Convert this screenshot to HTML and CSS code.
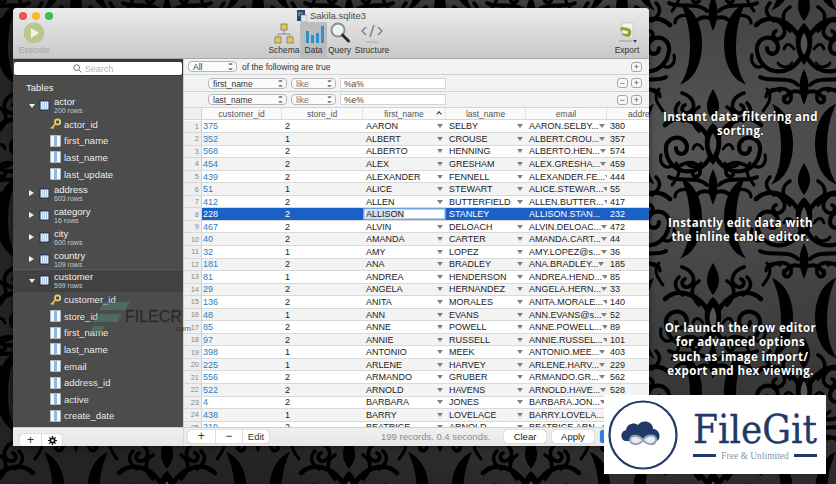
FILE: index.html
```html
<!DOCTYPE html>
<html lang="en">
<head>
<meta charset="utf-8">
<title>Sakila.sqlite3</title>
<link rel="stylesheet" href="styles.css">
</head>
<body>
<svg class="defs" width="0" height="0" aria-hidden="true">
  <defs>
    <g id="half" fill="none" stroke="#000" stroke-linecap="round">
      <path d="M3 10C14 32 44 28 47 4C49-12 27-14 26 0C26 9 37 9 37 1" stroke-width="4.2"/>
      <path d="M4 -8C14 -28 36 -34 48 -22" stroke-width="4.6"/>
      <path d="M14 -16C22 -24 24 -34 14 -40M30 -26C38 -32 40 -38 34 -44" stroke-width="3.6"/>
      <path d="M10 2C14 -4 18 -4 20 2M12 16C16 22 24 20 26 16" stroke-width="2.8"/>
      <path d="M6 38C16 28 34 36 44 30M2 46C10 42 16 46 20 52" stroke-width="3.8"/>
      <path d="M24 44C30 40 38 44 38 50M40 18C48 24 54 16 52 8" stroke-width="3.2"/>
      <path d="M62 -40C84 -28 84 22 62 34C72 16 72 -16 62 -40Z" fill="#000" stroke-width="3"/>
      <path d="M60 46C72 50 76 62 66 66C60 67 58 60 63 58" stroke-width="3.8"/>
      <path d="M56 -54C68 -62 80 -58 78 -48C76 -42 69 -44 71 -50" stroke-width="3.8"/>
      <path d="M50 -36C56 -44 60 -50 54 -58" stroke-width="3"/>
    </g>
    <g id="motif">
      <use href="#half"/>
      <use href="#half" transform="scale(-1 1)"/>
      <path d="M0-58C7-46 9-38 0-26C-9-38-7-46 0-58Z" fill="#000"/>
      <path d="M0-24C12-14 10 6 0 18C-10 6-12-14 0-24Z" fill="#000"/>
      <path d="M0-14C5-7 4 2 0 8C-4 2-5-7 0-14Z" fill="#555"/>
      <path d="M0 22C6 34 6 44 0 58C-6 44-6 34 0 22Z" fill="#000"/>
    </g>
    <pattern id="damask" width="182" height="174" patternUnits="userSpaceOnUse" patternTransform="translate(622 59)">
      <use href="#motif" x="91" y="88"/>
      <use href="#motif" x="0" y="-12"/>
      <use href="#motif" x="182" y="-12"/>
      <use href="#motif" x="0" y="162"/>
      <use href="#motif" x="182" y="162"/>
    </pattern>
    <radialGradient id="shade" cx="82%" cy="30%" r="85%">
      <stop offset="0" stop-color="#555"/>
      <stop offset="1" stop-color="#232323"/>
    </radialGradient>
    <symbol id="tbl" viewBox="0 0 11 11">
      <rect x=".5" y=".5" width="10" height="10" fill="#1c2a44"/>
      <rect x="1.5" y="1.5" width="8" height="8" fill="#e6eef6"/>
      <path d="M3.5 1.5v8M5.5 1.5v8M7.5 1.5v8" stroke="#a9c6e4" stroke-width=".9"/>
    </symbol>
    <symbol id="col" viewBox="0 0 11 12">
      <rect x=".5" y=".5" width="10" height="11" fill="#f4f7fb" stroke="#b8c4d0" stroke-width=".6"/>
      <rect x="4" y="1" width="3" height="10" fill="#8fb9e3"/>
    </symbol>
    <symbol id="key" viewBox="0 0 11 11">
      <circle cx="7.6" cy="3.4" r="2.6" fill="none" stroke="#f0cf6a" stroke-width="1.7"/>
      <path d="M5.6 5.4L1 10M2.4 8.6l1.4 1.2" stroke="#e9c04f" stroke-width="1.7" fill="none"/>
    </symbol>
  </defs>
</svg>

<main class="stage">
  <svg class="wallpaper" width="836" height="484" aria-hidden="true">
    <rect width="836" height="484" fill="url(#shade)"/>
    <rect width="836" height="484" fill="url(#damask)"/>
  </svg>

  <section class="window">
    <header class="chrome">
      <div class="titlebar">
        <div class="lights"><i class="light red"></i><i class="light amber"></i><i class="light green"></i></div>
        <div class="doc">
          <svg class="doc-icon" width="11" height="12" viewBox="0 0 11 12"><rect x="1" y="0" width="8" height="11" fill="#2b4468"/><rect x="5" y="5" width="6" height="7" fill="#dfe5ec" stroke="#7b8794" stroke-width=".6"/><path d="M2 3h5M2 5h2" stroke="#9fb4cc" stroke-width="1"/></svg>
          <span>Sakila.sqlite3</span>
        </div>
        <div></div>
      </div>
      <div class="toolbar">
        <div class="tool tool-exec">
          <svg width="22" height="22" viewBox="0 0 22 22"><circle cx="11" cy="11" r="10.5" fill="#b9c98e"/><path d="M8 6l8 5-8 5z" fill="#f1f3e6"/></svg>
          <span>Execute</span>
        </div>
        <div class="tabs">
          <div class="tool tool-schema">
            <svg width="22" height="22" viewBox="0 0 22 22"><path d="M11 8v4M5 15v-3h12v3" fill="none" stroke="#8a8a8a"/><rect x="8" y="2" width="6" height="6" fill="#e5c65b" stroke="#7c6b3a" stroke-width=".7"/><rect x="2" y="15" width="6" height="6" fill="#e5c65b" stroke="#7c6b3a" stroke-width=".7"/><rect x="14" y="15" width="6" height="6" fill="#e5c65b" stroke="#7c6b3a" stroke-width=".7"/></svg>
            <span>Schema</span>
          </div>
          <div class="tool tool-data">
            <svg width="22" height="22" viewBox="0 0 22 22"><path d="M3 9h3v12H3zM8 13h3v8H8zM13 11h3v10h-3zM18 4h3v17h-3z" fill="#2c93c8"/></svg>
            <span>Data</span>
          </div>
          <div class="tool tool-query">
            <svg width="22" height="22" viewBox="0 0 22 22"><circle cx="9" cy="8" r="6.5" fill="#eef1f3" stroke="#8d8d8d" stroke-width="2"/><path d="M13.5 13l6 6" stroke="#2a2a2a" stroke-width="3" stroke-linecap="round"/></svg>
            <span>Query</span>
          </div>
          <div class="tool tool-struct">
            <svg width="24" height="22" viewBox="0 0 24 22"><path d="M6 5L2 9l4 4M18 5l4 4-4 4M14 3l-4 12" fill="none" stroke="#8b8b8b" stroke-width="1.7"/><path d="M6 20h12" stroke="#aaa"/></svg>
            <span>Structure</span>
          </div>
        </div>
        <div class="tool tool-export">
          <svg width="22" height="22" viewBox="0 0 22 22"><path d="M6 1h11v15H6z" fill="#f2f2f2" stroke="#bbb" stroke-width=".7"/><path d="M10 4L4 6l1 4 1-2 5 1c2 0 1 3-1 3l-4-1 1 3 5 1c4 0 5-8 0-9L7 5z" fill="#83a832"/><path d="M3 19h13" stroke="#999"/><path d="M17 18h4l-2 3z" fill="#444"/></svg>
          <span>Export</span>
        </div>
      </div>
    </header>

    <div class="panes">
      <aside class="sidebar">
        <div class="searchbar">
          <div class="search">
            <svg width="9" height="9" viewBox="0 0 9 9"><circle cx="3.7" cy="3.7" r="2.9" fill="none" stroke="#777"/><path d="M6 6l2.6 2.6" stroke="#777"/></svg>
            <span>Search</span>
          </div>
        </div>
        <h2 class="tables">Tables</h2>
        <div class="tree">
          <div class="tbl"><i class="tri down"></i><svg class="ti"><use href="#tbl"/></svg><div><b>actor</b><small>200 rows</small></div></div>
          <div class="field"><svg class="fi"><use href="#key"/></svg>actor_id</div>
          <div class="field"><svg class="fi"><use href="#col"/></svg>first_name</div>
          <div class="field"><svg class="fi"><use href="#col"/></svg>last_name</div>
          <div class="field"><svg class="fi"><use href="#col"/></svg>last_update</div>
          <div class="tbl"><i class="tri"></i><svg class="ti"><use href="#tbl"/></svg><div><b>address</b><small>603 rows</small></div></div>
          <div class="tbl"><i class="tri"></i><svg class="ti"><use href="#tbl"/></svg><div><b>category</b><small>16 rows</small></div></div>
          <div class="tbl"><i class="tri"></i><svg class="ti"><use href="#tbl"/></svg><div><b>city</b><small>600 rows</small></div></div>
          <div class="tbl"><i class="tri"></i><svg class="ti"><use href="#tbl"/></svg><div><b>country</b><small>109 rows</small></div></div>
          <div class="tbl tbl-on"><i class="tri down"></i><svg class="ti"><use href="#tbl"/></svg><div><b>customer</b><small>599 rows</small></div></div>
          <div class="field"><svg class="fi"><use href="#key"/></svg>customer_id</div>
          <div class="field"><svg class="fi"><use href="#col"/></svg>store_id</div>
          <div class="field"><svg class="fi"><use href="#col"/></svg>first_name</div>
          <div class="field"><svg class="fi"><use href="#col"/></svg>last_name</div>
          <div class="field"><svg class="fi"><use href="#col"/></svg>email</div>
          <div class="field"><svg class="fi"><use href="#col"/></svg>address_id</div>
          <div class="field"><svg class="fi"><use href="#col"/></svg>active</div>
          <div class="field"><svg class="fi"><use href="#col"/></svg>create_date</div>
        </div>
      </aside>

      <div class="content">
        <div class="filter filter-head">
          <div class="select sel-all">All<i class="updown"></i></div>
          <span class="filter-label">of the following are true</span>
          <div class="roundbtns"><button class="rb">+</button></div>
        </div>
        <div class="filter filter-rule">
          <div class="select sel-col">first_name<i class="updown"></i></div>
          <div class="select sel-op">like<i class="updown"></i></div>
          <div class="input">%a%</div>
          <div class="roundbtns"><button class="rb">−</button><button class="rb">+</button></div>
        </div>
        <div class="filter filter-rule">
          <div class="select sel-col">last_name<i class="updown"></i></div>
          <div class="select sel-op">like<i class="updown"></i></div>
          <div class="input">%e%</div>
          <div class="roundbtns"><button class="rb">−</button><button class="rb">+</button></div>
        </div>

        <div class="grid">
          <div class="row head"><span class="n"></span><span>customer_id</span><span>store_id</span><span class="sorted">first_name<i class="caret"></i></span><span>last_name</span><span>email</span><span>addre</span></div>
          <div class="row"><span class="n">1</span><span class="id">375</span><span>2</span><span class="dd">AARON</span><span class="dd">SELBY</span><span class="dd">AARON.SELBY...</span><span>380</span></div>
          <div class="row"><span class="n">2</span><span class="id">352</span><span>1</span><span class="dd">ALBERT</span><span class="dd">CROUSE</span><span class="dd">ALBERT.CROU...</span><span>357</span></div>
          <div class="row"><span class="n">3</span><span class="id">568</span><span>2</span><span class="dd">ALBERTO</span><span class="dd">HENNING</span><span class="dd">ALBERTO.HEN...</span><span>574</span></div>
          <div class="row"><span class="n">4</span><span class="id">454</span><span>2</span><span class="dd">ALEX</span><span class="dd">GRESHAM</span><span class="dd">ALEX.GRESHA...</span><span>459</span></div>
          <div class="row"><span class="n">5</span><span class="id">439</span><span>2</span><span class="dd">ALEXANDER</span><span class="dd">FENNELL</span><span class="dd">ALEXANDER.FE...</span><span>444</span></div>
          <div class="row"><span class="n">6</span><span class="id">51</span><span>1</span><span class="dd">ALICE</span><span class="dd">STEWART</span><span class="dd">ALICE.STEWAR...</span><span>55</span></div>
          <div class="row"><span class="n">7</span><span class="id">412</span><span>2</span><span class="dd">ALLEN</span><span class="dd">BUTTERFIELD</span><span class="dd">ALLEN.BUTTER...</span><span>417</span></div>
          <div class="row selected"><span class="n">8</span><span class="id">228</span><span>2</span><span class="editing"><mark>ALLISON</mark></span><span class="dd">STANLEY</span><span class="dd">ALLISON.STAN...</span><span>232</span></div>
          <div class="row"><span class="n">9</span><span class="id">467</span><span>2</span><span class="dd">ALVIN</span><span class="dd">DELOACH</span><span class="dd">ALVIN.DELOAC...</span><span>472</span></div>
          <div class="row"><span class="n">10</span><span class="id">40</span><span>2</span><span class="dd">AMANDA</span><span class="dd">CARTER</span><span class="dd">AMANDA.CART...</span><span>44</span></div>
          <div class="row"><span class="n">11</span><span class="id">32</span><span>1</span><span class="dd">AMY</span><span class="dd">LOPEZ</span><span class="dd">AMY.LOPEZ@s...</span><span>36</span></div>
          <div class="row"><span class="n">12</span><span class="id">181</span><span>2</span><span class="dd">ANA</span><span class="dd">BRADLEY</span><span class="dd">ANA.BRADLEY...</span><span>185</span></div>
          <div class="row"><span class="n">13</span><span class="id">81</span><span>1</span><span class="dd">ANDREA</span><span class="dd">HENDERSON</span><span class="dd">ANDREA.HEND...</span><span>85</span></div>
          <div class="row"><span class="n">14</span><span class="id">29</span><span>2</span><span class="dd">ANGELA</span><span class="dd">HERNANDEZ</span><span class="dd">ANGELA.HERN...</span><span>33</span></div>
          <div class="row"><span class="n">15</span><span class="id">136</span><span>2</span><span class="dd">ANITA</span><span class="dd">MORALES</span><span class="dd">ANITA.MORALE...</span><span>140</span></div>
          <div class="row"><span class="n">16</span><span class="id">48</span><span>1</span><span class="dd">ANN</span><span class="dd">EVANS</span><span class="dd">ANN.EVANS@s...</span><span>52</span></div>
          <div class="row"><span class="n">17</span><span class="id">85</span><span>2</span><span class="dd">ANNE</span><span class="dd">POWELL</span><span class="dd">ANNE.POWELL...</span><span>89</span></div>
          <div class="row"><span class="n">18</span><span class="id">97</span><span>2</span><span class="dd">ANNIE</span><span class="dd">RUSSELL</span><span class="dd">ANNIE.RUSSEL...</span><span>101</span></div>
          <div class="row"><span class="n">19</span><span class="id">398</span><span>1</span><span class="dd">ANTONIO</span><span class="dd">MEEK</span><span class="dd">ANTONIO.MEE...</span><span>403</span></div>
          <div class="row"><span class="n">20</span><span class="id">225</span><span>1</span><span class="dd">ARLENE</span><span class="dd">HARVEY</span><span class="dd">ARLENE.HARV...</span><span>229</span></div>
          <div class="row"><span class="n">21</span><span class="id">556</span><span>2</span><span class="dd">ARMANDO</span><span class="dd">GRUBER</span><span class="dd">ARMANDO.GR...</span><span>562</span></div>
          <div class="row"><span class="n">22</span><span class="id">522</span><span>2</span><span class="dd">ARNOLD</span><span class="dd">HAVENS</span><span class="dd">ARNOLD.HAVE...</span><span>528</span></div>
          <div class="row"><span class="n">23</span><span class="id">4</span><span>2</span><span class="dd">BARBARA</span><span class="dd">JONES</span><span class="dd">BARBARA.JON...</span><span>8</span></div>
          <div class="row"><span class="n">24</span><span class="id">438</span><span>1</span><span class="dd">BARRY</span><span class="dd">LOVELACE</span><span class="dd">BARRY.LOVELA...</span><span>443</span></div>
          <div class="row"><span class="n">25</span><span class="id">219</span><span>2</span><span class="dd">BEATRICE</span><span class="dd">ARNOLD</span><span class="dd">BEATRICE.ARN...</span><span>224</span></div>
        </div>
      </div>
    </div>

    <footer class="footer">
      <div class="foot-left">
        <div class="seg"><span class="seg-a">+</span><span class="seg-b"><svg width="9" height="9" viewBox="0 0 9 9"><circle cx="4.5" cy="4.5" r="2.2" fill="none" stroke="#111" stroke-width="1.7"/><path d="M4.5 0v2M4.5 7v2M0 4.5h2M7 4.5h2M1.3 1.3l1.4 1.4M6.3 6.3l1.4 1.4M7.7 1.3L6.3 2.7M2.7 6.3L1.3 7.7" stroke="#111" stroke-width="1.2"/></svg></span></div>
      </div>
      <div class="foot-right">
        <div class="seg seg-edit"><span class="seg-c">+</span><span class="seg-c">−</span><span class="seg-d">Edit</span></div>
        <span class="status">199 records. 0.4 seconds.</span>
        <button class="fbtn">Clear</button>
        <button class="fbtn">Apply</button>
        <button class="fbtn primary">Save</button>
      </div>
    </footer>
  </section>

  <aside class="captions">
    <p class="cap cap-1">Instant data filtering and<br>sorting.</p>
    <p class="cap cap-2">Instantly edit data with<br>the inline table editor.</p>
    <p class="cap cap-3">Or launch the row editor<br>for advanced options<br>such as image import/<br>export and hex viewing.</p>
  </aside>

  <div class="watermark">
    <svg width="40" height="34" viewBox="0 0 40 34"><path d="M14 0h26l-5 8H9zM8 12h24l-5 8H3zM3 24h12l-4 7H0z" fill="#4d8a72" opacity=".5"/></svg>
    <div class="wm-text"><span>FILECR</span><small>.com</small></div>
  </div>

  <div class="logo">
    <svg class="logo-mark" width="72" height="72" viewBox="0 0 72 72">
      <circle cx="36" cy="36" r="33.5" fill="none" stroke="#1f3a68" stroke-width="2.2"/>
      <path d="M19 42c-5 0-7-9 0-11 1-7 9-8 12-5 4-6 15-4 15 4 7 0 9 11 3 12z" fill="#1f3a68"/>
      <path d="M36 41c-4-5-11-6-13-1-1 5 8 8 13 1 5-7 14-5 13 0-1 6-9 5-13 0z" fill="#e8ecf1" stroke="#93a1b6" stroke-width="2"/>
    </svg>
    <div class="logo-text">
      <div class="logo-name">FileGit</div>
      <div class="logo-tag"><i></i><span>Free &amp; Unlimited</span><i></i></div>
    </div>
  </div>
</main>
</body>
</html>
```

FILE: styles.css
```css
* { box-sizing: border-box; }
html, body { margin: 0; padding: 0; }
body { width: 836px; height: 484px; overflow: hidden; background: #333; font-family: "Liberation Sans", Arial, sans-serif; }
.defs { position: absolute; }
.stage { position: relative; width: 836px; height: 484px; display: grid; grid-template-columns: 649px 187px; overflow: hidden; }
.wallpaper { position: absolute; left: 0; top: 0; }

/* window */
.window { position: relative; margin: 8px 0 0 13px; width: 636px; height: 438px; display: flex; flex-direction: column; background: #ececec; border-radius: 4px 4px 0 0; overflow: hidden; box-shadow: 0 0 6px rgba(0,0,0,.6); }
.chrome { height: 51px; background: linear-gradient(#ebebeb, #c9c9c9); border-bottom: 1px solid #a9a9a9; flex: none; }
.titlebar { height: 14px; display: grid; grid-template-columns: 1fr auto 1fr; align-items: center; padding-top: 1px; }
.lights { display: flex; gap: 5px; padding-left: 6px; padding-top: 1px; }
.light { width: 8px; height: 8px; border-radius: 50%; display: block; }
.red { background: #f0524f; }
.amber { background: #f5b82e; }
.green { background: #38c149; }
.doc { display: flex; align-items: center; gap: 3px; font-size: 9.5px; color: #4a4a4a; }
.doc-icon { display: block; }
.toolbar { display: flex; height: 36px; padding-left: 4px; }
.tool { display: flex; flex-direction: column; align-items: center; justify-content: flex-end; font-size: 8.5px; line-height: 10px; color: #333; padding-bottom: 3px; }
.tool svg { display: block; margin-bottom: 1px; }
.tool-exec { width: 34px; color: #a3a3a3; }
.tabs { display: flex; margin-left: 217px; }
.tool-schema { width: 32px; }
.tool-data { width: 27px; background: #bcbcbc; border-radius: 2px 2px 0 0; }
.tool-query { width: 25px; }
.tool-struct { width: 40px; }
.tool-export { width: 30px; margin-left: auto; margin-right: 7px; }

/* panes */
.panes { display: flex; height: 368px; flex: none; }
.sidebar { width: 171px; flex: none; background: #4c4c4c; border-right: 1px solid #cfcfcf; color: #f2f2f2; overflow: hidden; padding-left: 1px; }
.searchbar { height: 17px; padding: 3px 1px 1px 0; background: #393939; }
.search { height: 13px; background: #fff; border-radius: 2px; display: flex; align-items: center; justify-content: center; gap: 3px; font-size: 9px; color: #b4b4b4; padding-right: 10px; }
.tables { margin: 5px 0 0 12px; height: 13px; font-size: 9.5px; line-height: 13px; font-weight: 400; }
.tree { margin-top: 1px; }
.tbl { position: relative; height: 22px; display: flex; align-items: center; padding-left: 16px; margin-left: -1px; }
.tree > .tbl:first-child { height: 21px; }
.tbl b { display: block; font-weight: 400; font-size: 9.5px; line-height: 10px; }
.tbl small { display: block; font-size: 7px; line-height: 7px; color: #c9c9c9; }
.tbl-on { background: #424242; border-top: 1px solid #5a5a5a; border-bottom: 1px solid #3d3d3d; margin-top: -1px; height: 23px; margin-bottom: -1px; }
.tri { width: 0; height: 0; border-style: solid; border-width: 3px 0 3px 5px; border-color: transparent transparent transparent #f0f0f0; margin-right: 3px; display: block; }
.tri.down { border-width: 4px 3px 0 3px; border-color: #f0f0f0 transparent transparent transparent; margin-right: 2px; }
.ti { width: 11px; height: 11px; margin: 0 4px 0 2px; flex: none; }
.field { height: 16.6px; display: flex; align-items: center; padding-left: 36px; font-size: 9.5px; text-shadow: 0 0 1px rgba(0,0,0,.4); }
.fi { width: 11px; height: 12px; margin-right: 3px; flex: none; }

/* filters */
.content { position: relative; flex: 1; min-width: 0; background: #f4f4f4; overflow: hidden; }
.filter { display: flex; align-items: center; border-bottom: 1px solid #d2d2d2; background: #f3f3f3; font-size: 8.5px; color: #333; position: relative; }
.filter-head { height: 16px; padding-left: 4px; }
.filter-rule { height: 17px; padding-left: 24px; }
.filter-rule + .filter-rule { height: 16px; }
.select { position: relative; height: 11px; line-height: 10px; border: 1px solid #b5b5b5; border-radius: 4px; background: #fbfbfb; padding-left: 4px; font-size: 8.5px; color: #333; }
.updown { position: absolute; right: 3px; top: 1px; width: 5px; height: 7px; border-top: 2px solid #8a8a8a; border-bottom: 2px solid #8a8a8a; border-left: 1px solid transparent; border-right: 1px solid transparent; border-radius: 2px; }
.sel-all { width: 49px; }
.sel-col { width: 79px; margin-right: 4px; }
.sel-op { width: 45px; margin-right: 4px; color: #777; }
.filter-label { margin-left: 5px; }
.input { width: 106px; height: 11px; line-height: 11px; background: #fff; border: 1px solid #d5d5d5; padding-left: 3px; font-size: 8.5px; color: #444; }
.roundbtns { position: absolute; right: 7px; top: 50%; transform: translateY(-50%); display: flex; gap: 3px; }
.rb { width: 11px; height: 10px; padding: 0; border: 1px solid #a5a5a5; border-radius: 3px; background: #f8f8f8; font: 9px/8px "Liberation Sans", sans-serif; color: #555; }

/* table */
.grid { display: grid; grid-auto-rows: 12.56px; position: relative; height: 319px; overflow: hidden; background: #fff; }
.row { display: grid; grid-template-columns: 18px 80px 81px 83px 80px 81px 42px; font-size: 9px; align-items: stretch; color: #222; background: #f3f3f3; border-bottom: 1px solid #d9d9d9; white-space: nowrap; }
.row:nth-child(even) { background: #fff; }
.row > span { display: flex; align-items: center; padding-left: 3px; overflow: hidden; }
.row > span.n { justify-content: flex-end; padding: 0 2px 0 0; font-size: 7.5px; color: #888; background: #efefef; border-right: 1px solid #d0d0d0; }
.row > span.id { color: #2a80c0; padding-left: 1px; }
.row > .dd { padding-right: 3px; justify-content: space-between; }
.row > .dd::after { content: ""; border-style: solid; border-width: 4px 3px 0 3px; border-color: #808080 transparent transparent transparent; flex: none; }
.head { height: 12px; margin-top: 0; background: #fafafa !important; color: #555; font-size: 8.5px; border-bottom: 1px solid #d6d6d6; }
.head > span { justify-content: center; border-right: 1px solid #e2e2e2; padding-left: 0 !important; }
.head > span:last-child { border-right: 0; justify-content: flex-start; padding-left: 21px !important; }
.sorted { position: relative; }
.caret { position: absolute; right: 4px; top: 4px; width: 4px; height: 4px; border-left: 1px solid #333; border-top: 1px solid #333; transform: rotate(45deg); }
.selected { background: #1a60c6 !important; color: #fff; }
.selected > span.id { color: #fff; }
.selected > .dd::after { border-top-color: transparent; }
.row > .editing { background: #fff; color: #222; box-shadow: inset 0 0 0 1.5px #6fa3dd; }
.editing mark { background: #cfe0f5; color: #222; }

/* footer */
.footer { flex: 1; display: flex; background: linear-gradient(#f0f0f0, #e6e6e6); border-top: 1px solid #cfcfcf; }
.foot-left { width: 171px; flex: none; padding: 2px 0 0 7px; border-right: 1px solid #d5d5d5; }
.foot-right { flex: 1; display: flex; align-items: flex-start; padding: 2px 0 0 4px; position: relative; }
.seg { display: inline-flex; height: 13px; background: #fff; border-radius: 3px; box-shadow: 0 0 1px rgba(0,0,0,.5); font-size: 9.5px; line-height: 13px; color: #333; }
.seg span { display: flex; align-items: center; justify-content: center; }
.seg-a { width: 22px; font-size: 12px; border-right: 1px solid #ddd; }
.seg-b { width: 20px; }
.seg-edit { width: 81px; }
.seg-c { width: 27.5px; font-size: 12px; border-right: 1px solid #ddd; }
.seg-d { flex: 1; }
.status { margin-left: 112px; width: 123px; font-size: 9.5px; line-height: 14px; color: #8b8b8b; }
.fbtn { width: 42px; height: 13px; margin-right: 6px; padding: 0; border: 0; border-radius: 3px; background: #fff; box-shadow: 0 0 1px rgba(0,0,0,.5); font: 9.5px/13px "Liberation Sans", sans-serif; color: #222; }
.primary { background: #2f7fe0; color: #fff; }

/* captions */
.captions { position: relative; color: #fff; }
.cap { position: absolute; left: 0; width: 100%; margin: 0; padding-right: 4px; text-align: center; font-family: "Open Sans", sans-serif; font-weight: 700; font-size: 11.5px; line-height: 14.4px; letter-spacing: .4px; white-space: nowrap; text-shadow: 0 0 2px #000; }
.cap-1 { top: 110px; }
.cap-2 { top: 216px; }
.cap-3 { top: 321px; }

/* overlays */
.watermark { position: absolute; left: 90px; top: 302px; display: flex; align-items: flex-start; pointer-events: none; }
.wm-text { position: relative; margin: 7px 0 0 -5px; width: 66px; font-weight: 400; font-size: 16px; line-height: 16px; color: rgba(20,20,20,.6); -webkit-text-stroke: .3px rgba(20,20,20,.5); }
.wm-text small { display: block; font-size: 8px; line-height: 8px; text-align: right; color: rgba(35,35,35,.75); -webkit-text-stroke: 0; }
.logo { position: absolute; left: 604px; top: 395px; width: 222px; height: 79px; background: #fff; display: flex; align-items: center; padding-left: 3px; }
.logo-mark { display: block; flex: none; }
.logo-text { margin-left: 14px; width: 124px; color: #1f3a68; }
.logo-name { font-family: "DejaVu Serif", serif; font-stretch: condensed; font-size: 40px; line-height: 40px; white-space: nowrap; -webkit-text-stroke: .3px #1f3a68; }
.logo-tag { display: flex; align-items: center; justify-content: space-between; margin-top: 2px; font-family: "Liberation Serif", serif; font-size: 9.5px; line-height: 10px; color: #8a96a8; white-space: nowrap; }
.logo-tag i { width: 23px; height: 3px; background: #1f3a68; display: block; }
```
